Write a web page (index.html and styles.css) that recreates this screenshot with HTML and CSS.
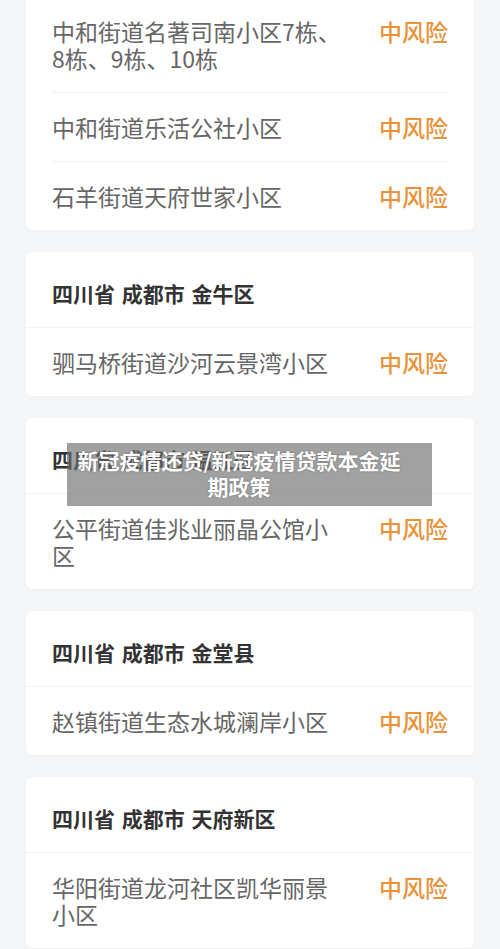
FILE: index.html
```html
<!DOCTYPE html>
<html lang="zh-CN">
<head>
<meta charset="utf-8">
<title>中风险地区</title>
<link rel="stylesheet" href="styles.css">
</head>
<body>
<div class="list">
  <section class="card">
    <div class="row">
      <span class="name">中和街道名著司南小区7栋、8栋、9栋、10栋</span>
      <span class="risk">中风险</span>
    </div>
    <div class="row">
      <span class="name">中和街道乐活公社小区</span>
      <span class="risk">中风险</span>
    </div>
    <div class="row">
      <span class="name">石羊街道天府世家小区</span>
      <span class="risk">中风险</span>
    </div>
  </section>
  <section class="card">
    <div class="head">四川省 成都市 金牛区</div>
    <div class="row">
      <span class="name">驷马桥街道沙河云景湾小区</span>
      <span class="risk">中风险</span>
    </div>
  </section>
  <section class="card">
    <div class="head">四川省 成都市 温江区</div>
    <div class="row">
      <span class="name">公平街道佳兆业丽晶公馆小区</span>
      <span class="risk">中风险</span>
    </div>
  </section>
  <section class="card">
    <div class="head">四川省 成都市 金堂县</div>
    <div class="row">
      <span class="name">赵镇街道生态水城澜岸小区</span>
      <span class="risk">中风险</span>
    </div>
  </section>
  <section class="card">
    <div class="head">四川省 成都市 天府新区</div>
    <div class="row">
      <span class="name">华阳街道龙河社区凯华丽景小区</span>
      <span class="risk">中风险</span>
    </div>
  </section>
</div>
<div class="caption">新冠疫情还贷/新冠疫情贷款本金延期政策</div>
</body>
</html>
```
FILE: styles.css
```css
html, body {
  margin: 0;
  padding: 0;
}
body {
  background: #f5f6f8;
  font-family: "Noto Sans CJK SC", "Noto Sans", sans-serif;
  width: 500px;
  height: 949px;
  overflow: hidden;
}
.list {
  margin-top: -3px;
  padding: 0 26px;
  display: flex;
  flex-direction: column;
  gap: 22px;
}
.card {
  background: #ffffff;
  border-radius: 6px;
  box-shadow: 0 1px 4px rgba(0, 0, 0, 0.035);
}
.head {
  padding: 27px 26px 20px;
  font-size: 21px;
  line-height: 28px;
  font-weight: 700;
  color: #333333;
  word-spacing: 2px;
  border-bottom: 1px solid #f1f2f4;
}
.row {
  margin: 0 26px;
  padding: 21px 0 20px;
  display: flex;
  align-items: flex-start;
  font-size: 23px;
  line-height: 27px;
}
.row + .row {
  border-top: 1px solid #f1f2f4;
}
.name {
  flex: 1;
  color: #666666;
}
.risk {
  margin-left: 35px;
  color: #e8923a;
  font-weight: 500;
  white-space: nowrap;
}
.caption {
  position: absolute;
  left: 67px;
  top: 443px;
  width: 326px;
  height: 52px;
  padding: 4px 30px 7px 9px;
  background: rgba(110, 110, 110, 0.65);
  color: #ffffff;
  font-size: 21px;
  line-height: 26px;
  font-weight: 700;
  text-align: center;
  text-shadow: 0 0 2px rgba(0, 0, 0, 0.35);
}
```
